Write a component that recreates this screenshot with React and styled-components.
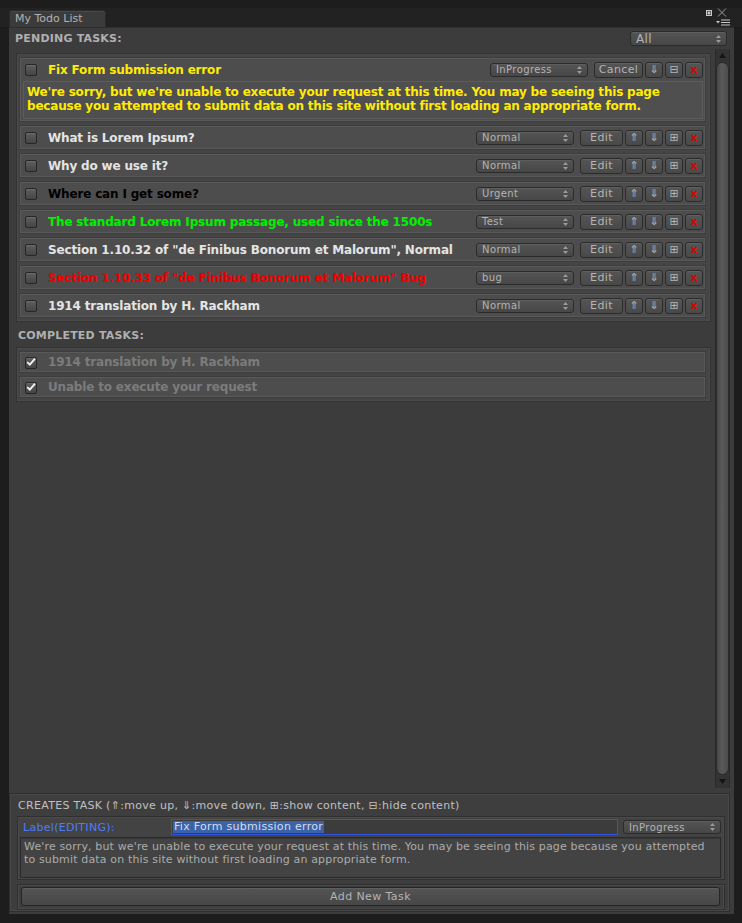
import React from 'react';
import styled, { createGlobalStyle } from 'styled-components';

const GlobalStyle = createGlobalStyle`
  html, body {
    margin: 0;
    padding: 0;
    background: #1d1d1d;
  }
  body {
    font-family: "DejaVu Sans", "Liberation Sans", sans-serif;
  }
`;

const Screen = styled.div`
  width: 742px;
  height: 923px;
  box-sizing: border-box;
  padding: 8px 8px 9px 9px;
  display: flex;
  flex-direction: column;
  background: #1d1d1d;
`;

const TabBar = styled.div`
  height: 19px;
  display: flex;
  justify-content: space-between;
  align-items: flex-end;
  background: #222;
  margin: 0 -8px 0 -9px;
  padding: 0 4px 0 9px;
`;

const Tab = styled.div`
  width: 97px;
  height: 17px;
  box-sizing: border-box;
  background: #3b3b3b;
  border: 1px solid #2b2b2b;
  border-bottom: none;
  border-radius: 3px 3px 0 0;
  box-shadow: inset 0 1px 0 #484848;
  color: #b2b2b2;
  font-size: 11px;
  line-height: 16px;
  padding-left: 5px;
`;

const WinIcons = styled.div`
  display: flex;
  flex-direction: column;
  align-items: flex-end;
  gap: 2px;
  padding: 0 8px 1px 0;
  height: 19px;
  box-sizing: border-box;
`;

const Body = styled.div`
  flex: 1;
  display: flex;
  flex-direction: column;
  background: #3c3c3c;
  border-top: 1px solid #2e2e2e;
  padding-bottom: 2px;
`;

const HeaderRow = styled.div`
  height: 21px;
  display: flex;
  align-items: center;
  justify-content: space-between;
  padding: 0 7px 0 6px;
`;

const SectionTitle = styled.div`
  color: #b0b0b0;
  font-size: 11px;
  font-weight: bold;
  line-height: 13px;
  letter-spacing: 0.2px;
  padding: ${p => (p.$spaced ? '7px 0 5px 2px' : '0')};
`;

const ScrollArea = styled.div`
  flex: 1;
  display: flex;
  min-height: 0;
`;

const ListColumn = styled.div`
  flex: 1;
  padding: 4px 3px 0 7px;
`;

const Group = styled.div`
  border: 1px solid #333;
  box-shadow: inset 0 0 0 1px #4a4a4a;
  background: #454545;
  padding: 3px 4px 3px 2px;
  display: flex;
  flex-direction: column;
  gap: 3px;
`;

const Row = styled.div`
  min-height: ${p => (p.$done ? 22 : 25)}px;
  box-sizing: border-box;
  border: 1px solid #3d3d3d;
  box-shadow: inset 0 0 0 1px #595959;
  background: #4d4d4d;
  padding-bottom: ${p => (p.$open ? 2 : 0)}px;
`;

const RowHead = styled.div`
  height: ${p => (p.$done ? 20 : 23)}px;
  display: flex;
  align-items: center;
  padding: 0 2px 0 5px;
`;

const Check = styled.div`
  width: 12px;
  height: 12px;
  box-sizing: border-box;
  flex: none;
  border: 1px solid #262626;
  border-radius: 2px;
  background: linear-gradient(#5e5e5e, #454545);
  box-shadow: inset 0 1px 0 #6a6a6a;
  display: flex;
  align-items: center;
  justify-content: center;
  margin-top: ${p => (p.$down ? 2 : 0)}px;
`;

const Title = styled.div`
  flex: 1;
  margin-left: 11px;
  color: ${p => p.$color};
  font-size: 12px;
  font-weight: bold;
  letter-spacing: -0.17px;
  white-space: nowrap;
  overflow: hidden;
`;

const Controls = styled.div`
  display: flex;
  align-items: center;
  gap: 2px;
`;

const Button = styled.div`
  width: ${p => p.$w}px;
  height: 16px;
  box-sizing: border-box;
  border: 1px solid #2b2b2b;
  border-radius: 3px;
  background: linear-gradient(#555, #494949);
  box-shadow: inset 0 1px 0 #606060;
  color: ${p => (p.$danger ? '#e00000' : '#b4b4b4')};
  font-size: ${p => (p.$icon ? 11 : 11)}px;
  font-weight: ${p => (p.$danger ? 'bold' : 'normal')};
  letter-spacing: ${p => (p.$icon ? 0 : 0.4)}px;
  display: flex;
  align-items: center;
  justify-content: center;
  line-height: 1;
`;

const Dropdown = styled.div`
  width: ${p => p.$w}px;
  height: ${p => p.$h || 14}px;
  box-sizing: border-box;
  border: 1px solid #2b2b2b;
  border-radius: 3px;
  background: linear-gradient(#545454, #474747);
  box-shadow: inset 0 1px 0 #5e5e5e;
  color: #b4b4b4;
  font-size: ${p => p.$fs || 10}px;
  letter-spacing: 0.4px;
  padding: 0 5px 0 5px;
  margin-right: ${p => p.$mr || 0}px;
  display: flex;
  align-items: center;
  justify-content: space-between;
`;

const Content = styled.div`
  margin: 0 2px 0 3px;
  height: 38px;
  box-sizing: border-box;
  border: 1px solid #5c5c5c;
  background: #4f4f4f;
  color: ${p => p.$color};
  font-size: 12px;
  font-weight: bold;
  letter-spacing: -0.2px;
  line-height: 14px;
  padding: 3px 3px;
  white-space: pre-line;
`;

const Scrollbar = styled.div`
  width: 15px;
  margin: 0 4px 0 1px;
  box-sizing: border-box;
  background: #333;
  border-left: 1px solid #2a2a2a;
  border-right: 1px solid #2a2a2a;
  display: flex;
  flex-direction: column;
  align-items: center;
`;

const ScrollArrow = styled.div`
  height: 13px;
  flex: none;
  display: flex;
  align-items: center;
  justify-content: center;
`;

const Thumb = styled.div`
  flex: 1;
  width: 13px;
  box-sizing: border-box;
  border: 1px solid #2a2a2a;
  border-radius: 7px;
  background: linear-gradient(to right, #474747, #5a5a5a 45%, #4c4c4c);
`;

const Footer = styled.div`
  margin: 5px 4px 0 0;
  border: 1px solid #2f2f2f;
  box-shadow: inset 0 0 0 1px #474747;
  background: #3e3e3e;
  padding: 0 4px 1px 7px;
`;

const FooterTitle = styled.div`
  color: #c0c0c0;
  font-size: 11px;
  line-height: 13px;
  letter-spacing: 0.3px;
  padding: 5px 0 4px 1px;
`;

const EditorBox = styled.div`
  border: 1px solid #2f2f2f;
  box-shadow: inset 0 0 0 1px #4a4a4a;
  background: #434343;
  padding: 0 3px 1px 2px;
`;

const EditorRow = styled.div`
  height: 20px;
  display: flex;
  align-items: center;
`;

const FieldLabel = styled.div`
  width: 148px;
  padding-left: 3px;
  color: #4f7df5;
  font-size: 11px;
  letter-spacing: 0.3px;
`;

const TextField = styled.div`
  flex: 1;
  height: 16px;
  box-sizing: border-box;
  border: 1px solid #3052e0;
  background: #3c3c3c;
  margin-right: 5px;
  padding: 1px 1px;
  display: flex;
  align-items: center;
`;

const Selected = styled.span`
  background: #3b64a8;
  color: #d6dcea;
  font-size: 11px;
  line-height: 12px;
  letter-spacing: 0.3px;
  padding: 0 1px;
`;

const TextArea = styled.div`
  height: 41px;
  box-sizing: border-box;
  border: 1px solid #2a2a2a;
  background: #434343;
  box-shadow: inset 0 1px 0 #383838;
  color: #ababab;
  font-size: 11px;
  line-height: 13px;
  letter-spacing: 0.15px;
  padding: 2px 3px;
  white-space: pre-line;
`;

const ButtonBox = styled.div`
  margin-top: 4px;
  border: 1px solid #2f2f2f;
  box-shadow: inset 0 0 0 1px #4a4a4a;
  padding: 2px 4px 3px 3px;
`;

const WideButton = styled.div`
  height: 19px;
  box-sizing: border-box;
  border: 1px solid #262626;
  border-radius: 3px;
  background: linear-gradient(#545454, #474747);
  box-shadow: inset 0 1px 0 #5f5f5f;
  color: #b4b4b4;
  font-size: 11px;
  letter-spacing: 0.4px;
  display: flex;
  align-items: center;
  justify-content: center;
`;

const Arrows = () => (
  <svg width="5" height="8" viewBox="0 0 5 8">
    <path d="M2.5 0 L5 3 L0 3 Z M0 5 L5 5 L2.5 8 Z" fill="#9a9a9a" />
  </svg>
);

const Tick = () => (
  <svg width="12" height="12" viewBox="0 0 12 12" style={{ marginTop: -2 }}>
    <path d="M1.5 6.2 L4.6 9.2 L10.8 2" stroke="#f4f4f4" strokeWidth="2.2" fill="none" />
  </svg>
);

const Select = ({ w, h, fs, mr, children }) => (
  <Dropdown $w={w} $h={h} $fs={fs} $mr={mr}>
    <span>{children}</span>
    <Arrows />
  </Dropdown>
);

const description =
  "We're sorry, but we're unable to execute your request at this time. You may be seeing this page\nbecause you attempted to submit data on this site without first loading an appropriate form.";

const pending = [
  { title: 'Fix Form submission error', color: '#ffeb04', status: 'InProgress', open: true },
  { title: 'What is Lorem Ipsum?', color: '#e4e4e4', status: 'Normal' },
  { title: 'Why do we use it?', color: '#e4e4e4', status: 'Normal' },
  { title: 'Where can I get some?', color: '#000000', status: 'Urgent' },
  { title: 'The standard Lorem Ipsum passage, used since the 1500s', color: '#00f000', status: 'Test' },
  { title: 'Section 1.10.32 of "de Finibus Bonorum et Malorum", Normal', color: '#e4e4e4', status: 'Normal' },
  { title: 'Section 1.10.33 of "de Finibus Bonorum et Malorum" Bug', color: '#ee0000', status: 'bug' },
  { title: '1914 translation by H. Rackham', color: '#e4e4e4', status: 'Normal' },
];

const completed = ['1914 translation by H. Rackham', 'Unable to execute your request'];

const PendingRow = ({ task }) => (
  <Row $open={task.open}>
    <RowHead>
      <Check />
      <Title $color={task.color}>{task.title}</Title>
      <Controls>
        <Select w={98} mr={4}>{task.status}</Select>
        {task.open ? (
          <Button $w={49}>Cancel</Button>
        ) : (
          <>
            <Button $w={43}>Edit</Button>
            <Button $w={18} $icon>⇑</Button>
          </>
        )}
        <Button $w={18} $icon>⇓</Button>
        <Button $w={18} $icon>{task.open ? '⊟' : '⊞'}</Button>
        <Button $w={18} $icon $danger>x</Button>
      </Controls>
    </RowHead>
    {task.open && <Content $color={task.color}>{description}</Content>}
  </Row>
);

const App = () => (
  <>
    <GlobalStyle />
    <Screen>
      <TabBar>
        <Tab>My Todo List</Tab>
        <WinIcons>
          <svg width="24" height="9" viewBox="0 0 24 9">
            <rect x="0.5" y="2.5" width="5" height="5" fill="none" stroke="#c8c8c8" />
            <rect x="1.5" y="3.5" width="3" height="3" fill="#c8c8c8" />
            <path d="M12 0.5 L20 8.5 M20 0.5 L12 8.5" stroke="#9a9a9a" strokeWidth="1" />
          </svg>
          <svg width="14" height="7" viewBox="0 0 14 7">
            <path d="M0 2 L4 2 L2 4.5 Z" fill="#c8c8c8" />
            <path d="M5 1 H14 M5 3.5 H14 M5 6 H14" stroke="#c8c8c8" strokeWidth="1.2" />
          </svg>
        </WinIcons>
      </TabBar>
      <Body>
        <HeaderRow>
          <SectionTitle>PENDING TASKS:</SectionTitle>
          <Select w={97} h={15} fs={12}>All</Select>
        </HeaderRow>
        <ScrollArea>
          <ListColumn>
            <Group>
              {pending.map(task => (
                <PendingRow key={task.title} task={task} />
              ))}
            </Group>
            <SectionTitle $spaced>COMPLETED TASKS:</SectionTitle>
            <Group>
              {completed.map(title => (
                <Row key={title} $done>
                  <RowHead $done>
                    <Check $down>
                      <Tick />
                    </Check>
                    <Title $color="#7c7c7c">{title}</Title>
                  </RowHead>
                </Row>
              ))}
            </Group>
          </ListColumn>
          <Scrollbar>
            <ScrollArrow>
              <svg width="7" height="5" viewBox="0 0 7 5">
                <path d="M3.5 0 L7 5 L0 5 Z" fill="#151515" />
              </svg>
            </ScrollArrow>
            <Thumb />
            <ScrollArrow>
              <svg width="7" height="5" viewBox="0 0 7 5">
                <path d="M0 0 L7 0 L3.5 5 Z" fill="#151515" />
              </svg>
            </ScrollArrow>
          </Scrollbar>
        </ScrollArea>
        <Footer>
          <FooterTitle>CREATES TASK (⇑:move up, ⇓:move down, ⊞:show content, ⊟:hide content)</FooterTitle>
          <EditorBox>
            <EditorRow>
              <FieldLabel>Label(EDITING):</FieldLabel>
              <TextField>
                <Selected>Fix Form submission error</Selected>
              </TextField>
              <Select w={98}>InProgress</Select>
            </EditorRow>
            <TextArea>
              {"We're sorry, but we're unable to execute your request at this time. You may be seeing this page because you attempted\nto submit data on this site without first loading an appropriate form."}
            </TextArea>
          </EditorBox>
          <ButtonBox>
            <WideButton>Add New Task</WideButton>
          </ButtonBox>
        </Footer>
      </Body>
    </Screen>
  </>
);

export default App;
